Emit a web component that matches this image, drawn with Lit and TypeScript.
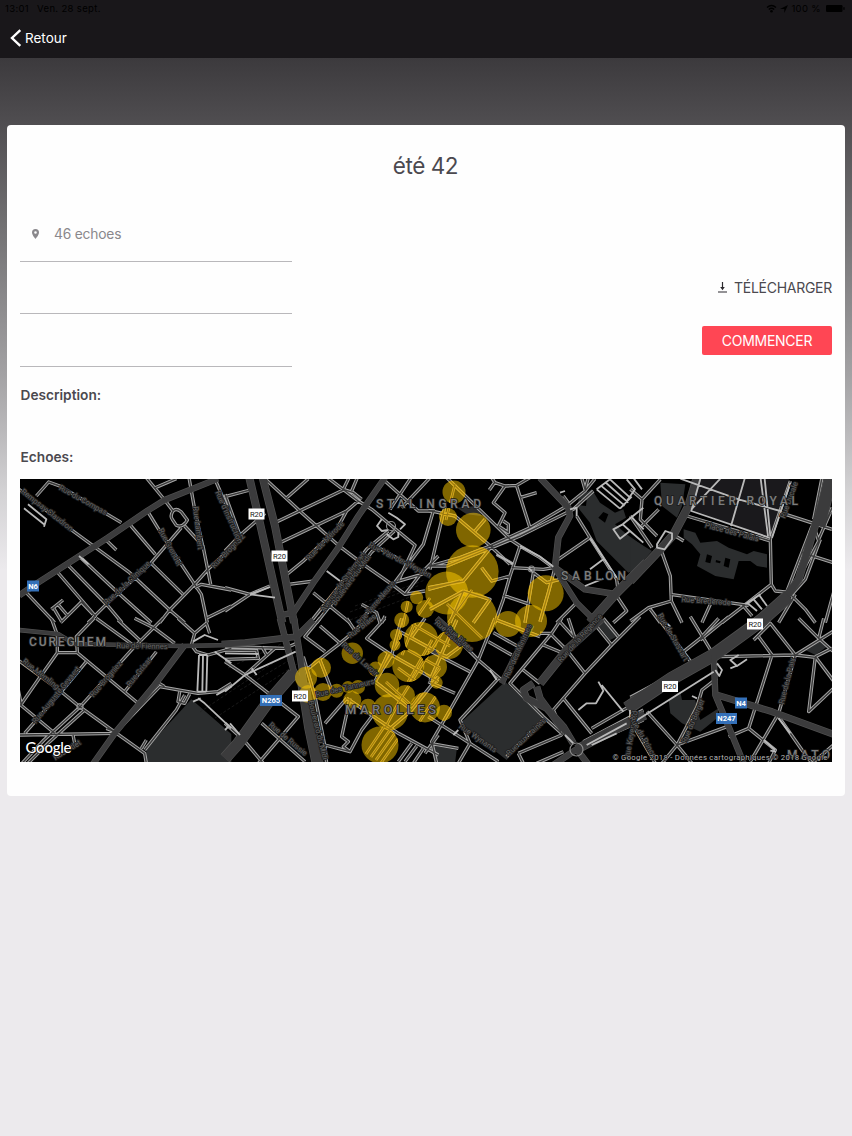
import { css, html, svg, LitElement } from "lit";
import { customElement, property } from "lit/decorators.js";

// The map is split in tiles, each drawn at three times its size.
const tiles = [
  {
    x: 18,
    y: 476,
    major: [[15, "M4 358L60 320L150 262L270 185L390 103L440 72L600 8"]],
    minor:
      "M0 38L165 165L335 290L455 402L500 440M55 60L92 18L125 30L310 140M335 145L412 235M225 425L265 385L400 260L490 155M400 262L495 355M388 105L425 165L490 265L530 325L550 355L568 440M385 5L440 72L465 105M500 150L555 210L578 325M412 35L475 8M513 5L530 100L553 205M592 12L630 100M425 440L455 402L530 325L570 280L640 215M530 335L550 325L640 342M568 425L640 390M260 188L295 222M183 240L300 350L400 440M148 265L270 390L312 440M118 288L232 420L210 440M25 350L110 440M128 440L190 378L225 415M100 400L135 372M120 385L150 420M108 398L130 435M465 105Q455 120 463 130L475 148Q490 155 503 140L508 132L490 108Q475 95 465 105",
    white: "M30 85L85 130L78 152M18 97L78 145M183 240L212 265",
    parks: "",
  },
  {
    x: 18,
    y: 620,
    major: [
      [10, "M0 30L120 42L170 72L490 78L640 75"],
      [15, "M500 75L410 195L290 340L225 432"],
    ],
    minor:
      "M100 -5L118 45L118 98L178 98L175 50L228 -5M118 98L60 180L8 255L110 340M178 98L360 250M0 120L130 215L185 260L275 325L380 400L385 430M205 125L130 215L20 340M345 85L185 262L78 360L12 430M200 270L95 365L30 430M415 95L320 215M235 -5L345 75M300 0L370 65M350 -5L410 25L470 70M435 -5L345 85M0 345L290 340M0 205L10 255M480 -5L530 40L520 75L535 95L570 105L640 85M530 40L565 10L575 40M305 325L425 200L540 220L600 215L640 190M415 185L440 200M500 225L475 270L380 390M485 215L480 245L500 250L515 222M165 345L172 380M265 325L290 335M370 385L385 360",
    white: "M543 105L538 215M555 105L553 215M568 105L565 215M538 215L565 215M543 105L568 105M540 235L560 250L640 325M525 245L548 235M525 65L560 45L600 60M590 95L640 130M595 225L640 200",
    parks: "M520 238L640 342L640 430L385 430L385 385Z",
  },
  {
    x: 225,
    y: 476,
    major: [
      [20, "M73 5L100 120L172 440M113 5L150 150L207 440"],
      [15, "M480 5L400 120L340 215L265 320L205 410L165 418"],
    ],
    minor:
      "M122 10L230 110L345 212L415 265L505 328L540 355L600 345M0 62L75 42M0 55L45 178L120 112M45 178L0 225M185 65L250 8M230 110L225 105M150 140L355 42M165 200L365 105L400 75M308 5L400 75L440 100L500 150L570 208L520 315M365 105L335 160L235 255L180 300M190 325L268 315M0 335L75 355L135 330M75 355L0 405M480 15L580 105L630 105M615 5L530 95M558 5L495 100M490 165L425 220L335 340L255 440M508 165L440 228L350 345L275 440M460 215L600 292L505 320M625 105L595 205L505 325L400 440M640 240L590 290L540 355M265 350L375 440M410 385L455 410L465 440M355 40L385 50L410 70M372 5L355 40M397 5L380 45M470 440L480 420",
    white: "M305 285L345 315M75 355L150 365M75 355L135 333M470 130L456 150L470 165L490 162M485 175L505 190L520 183L520 168M525 160L540 145L515 125L490 110",
    parks: "",
  },
  {
    x: 225,
    y: 620,
    major: [
      [16, "M165 -5L205 150L240 210M207 -5L222 90L240 210M-10 72L60 68L215 50L265 0"],
      [32, "M205 160L130 245L40 370L0 415"],
      [32, "M235 190L255 320L280 440"],
    ],
    minor:
      "M235 110L270 230L300 380L305 430M285 18L345 70L300 105L250 145M285 -5L240 50L300 95M345 70L390 32L365 -5M390 32L425 -5M480 -5L425 55L500 105M0 90L95 92L100 115L0 118M0 125L60 165L220 290L100 430M0 80L180 85L215 70M60 365L115 430M110 310L240 425M285 120L320 210M365 235L300 310M365 235L410 265L520 340L640 405M300 375L375 395M375 235L350 350L370 365L355 380L375 395L410 330L440 290M600 400L640 345M530 -5L500 105L450 185L560 270M525 35L640 98M500 105L640 185M450 185L490 100M640 170L560 270L490 330M600 -5L560 50M520 425L560 370M540 425L575 378M565 430L595 385M300 375L270 430M110 80L125 105M150 85L60 165M0 310L45 350",
    white: "M0 215L60 165L212 95M0 330L10 320M15 310L45 345M80 145L95 165M0 100L100 102",
    parks: "",
  },
  {
    x: 430,
    y: 476,
    major: [
      [16, "M330 5L415 95L420 120L385 185L375 275L465 340L560 355"],
      [24, "M650 260L560 350L480 440"],
      [14, "M370 270L440 380L500 440"],
    ],
    minor:
      "M-5 103L75 120L175 205L240 265M50 5L240 190L270 210L330 245L370 275M-5 340L90 315M0 270L90 245L180 210L300 155L410 90L465 45L495 8M50 270L270 180L430 100L490 45M-5 270L50 270M185 5L195 20L225 30L260 28L300 5M195 18L178 42M225 30L190 80L225 110L205 150L235 170L235 145L220 135M260 30L300 155M270 65L320 50M245 275L340 280L370 275M270 210L240 300L220 370L195 440M220 358L300 385M375 275L355 350L330 437M390 310L350 320L310 290M385 250L480 185M440 120L480 185L560 310L565 350M380 440L440 380M400 60L415 80M455 5L465 40L475 5M200 235L250 265M0 280L45 90M560 360L590 405L550 440M-5 335L100 315L190 205M155 275L185 315L240 300M100 345L180 370L130 440M100 345L60 440M0 400L100 345M135 165L165 130M310 290L285 440",
    white: "M270 210L330 242L370 272M520 250L480 280M520 308L465 330M200 235L250 265M390 50L405 45M420 100L440 95L440 120M500 40L570 98M512 28L583 88M525 18L595 80M540 10L600 65M500 40L540 10M570 98L605 62M550 160L578 145L600 165L570 188ZM578 145L640 95M600 165L640 200M590 10L615 40L580 90M480 185L560 305M295 275L310 290",
    parks:
      "M450 60L485 40L510 80L555 110L580 100L588 125L555 145L590 175L640 210L640 270L595 290L545 240L500 195L480 140L440 90ZM450 70L450 88L468 90L470 72ZM505 125L520 108L535 115L525 140ZM80 95L140 90L155 120L110 115Z",
  },
  {
    x: 430,
    y: 620,
    major: [
      [14, "M20 -5L70 40L120 90M305 15L260 100L215 190"],
      [22, "M515 -5L410 90L330 190"],
      [18, "M310 190L280 210L290 235L350 265L400 320L430 370M320 200L330 235L400 330"],
      [24, "M440 388L540 335L645 285"],
      [16, "M480 440L440 388L370 435"],
    ],
    minor:
      "M195 -5L145 120L60 270L5 365L20 430M145 120L215 180M145 120L100 75M120 155L-5 90M75 220L-5 185M-5 290L120 370L205 425M120 370L85 430M190 38L265 80M175 65L245 105M395 -5L365 40L240 190L265 215L340 290L400 345M360 40L410 90L465 160M385 0L430 50M340 75L400 100M415 -5L435 55M280 150L330 190M480 -5L545 75M520 -5L565 50M630 -10L545 75L465 160L370 270L400 340M400 235L485 340M485 325L640 235M205 175L90 300L120 370M230 410L340 300M265 400L395 345M265 400L280 430M0 370L85 385M320 430L400 395M330 40L365 40M200 0L330 50M0 180L80 0M0 90L50 110L90 80M460 365L640 270M465 378L640 300",
    white: "M445 270L470 250L498 250L520 212L505 185M515 195L580 275M180 150L200 180M70 345L85 330M470 375L590 310M485 375L560 340M405 345L430 370M600 270L600 300",
    parks: "M225 185L340 290L230 420L90 310ZM500 10L530 5L560 50L540 60ZM0 375L80 390L75 430L15 430Z",
  },
  {
    x: 632,
    y: 476,
    major: [
      [22, "M195 5L170 90L125 175L85 220L-5 315"],
      [36, "M600 -10L560 150"],
      [20, "M555 130L500 310L460 365"],
      [36, "M470 360L380 440"],
    ],
    minor:
      "M30 70L25 130L75 180M-5 40L30 70L85 10M-5 120L60 215M80 100L30 150M165 120L415 195M415 190L418 325L430 345L480 350M418 325L270 440M115 355L350 388M90 230L115 300L118 375L150 440M118 375L50 395L-5 435M235 385L210 440M55 400L85 440M475 15L415 190M445 110L600 160M545 150L560 195L480 345M540 150L465 345M565 190L520 310L480 355M510 230L610 262M470 350L520 400L550 440M610 330L580 440M330 385L360 420M600 95L580 140M570 5L545 130M595 110L560 190M440 440L490 355M130 180L155 195",
    white: "M145 8L320 70L445 105M205 8L178 105L412 185M265 8L178 100M338 8L297 150M386 8L408 180M398 8L415 180M475 20L420 185M345 380L375 405M365 370L390 400M380 355L405 390M340 385L385 355M75 205L100 165L120 172L120 190L98 220L75 215ZM0 0L30 40M0 125L35 160",
    parks:
      "M85 20L160 25L150 90L135 125L90 90ZM-5 185L60 225L-5 300ZM155 160L190 170L205 200L255 195L290 215L345 235L365 225L405 235L405 275L375 270L355 255L320 255L305 310L250 300L195 270L205 235L180 205L155 185ZM225 235L240 240L235 262L220 258ZM280 245L295 250L290 275L275 270ZM252 252L266 256L264 262L251 259Z",
  },
  {
    x: 632,
    y: 620,
    major: [
      [36, "M390 0L245 105L120 175L-15 265"],
      [15, "M245 105L250 225L290 320L335 430"],
      [17, "M255 225L420 275L610 345"],
    ],
    minor:
      "M-5 232L215 115M75 -10L180 130L215 115M155 95L205 55L260 -5M175 -10L245 105M290 -10L205 60M380 50L420 105L350 325L290 350M265 110L490 105L550 112M365 60L415 10L490 105L610 30M550 110L610 190M550 110L530 275L610 200M500 -5L560 55L610 100M600 85L550 110M490 105L440 280L355 425M440 290L510 390L540 430M350 325L430 390L410 430M610 370L540 430M255 175L210 210L195 260L135 375L90 430M45 275L135 375L180 430M0 310L70 430M135 375L285 320M0 250L20 240L35 245L40 230L20 228M265 90L400 5M205 120L230 105M250 100L265 85M560 55L575 -5",
    white: "M5 307L245 155M255 130L270 150L262 168L250 150M320 105L295 120L315 138L345 118M295 145L320 135M440 295L475 340M395 360L430 390M415 392L432 395M105 10L115 20M180 228L195 235",
    parks: "M110 240L145 215L150 240L190 240L195 270L205 300L260 265L255 295L205 335L150 310L115 280ZM520 90L560 60L585 80L550 105Z",
  },
];

// small streets and stairs below the echoes
const alleys =
  "M472 590L449 622L425 660L400 700L385 728M447 604L482 638M415 622L402 655M410 592L400 640L385 665M430 598L412 624L450 646M408 650L440 668M398 668L428 690M386 682L412 706M440 668L412 706M432 640L408 682M440 690L418 724M455 484L446 520M366 754l18 -27M371 757l19 -27M376 760l19 -27M381 763l19 -27M383 726l18 10";

// x, y, radius
const echoes = [
  [454, 492, 11.5], [448, 517, 9], [473.3, 530, 17.3], [472.3, 571.5, 26.3],
  [446.7, 593, 21.5], [545.7, 593.3, 18], [472, 617, 25], [508, 624, 13],
  [531, 621, 16], [449, 645, 14], [416.7, 597.7, 6.5], [406.7, 606.7, 6],
  [425, 609, 9], [401.7, 620, 7.5], [352.3, 653.3, 10.7], [421, 639, 17],
  [408.3, 666, 16], [435, 666.7, 12], [396, 635, 6], [395, 645, 5.5],
  [386, 660, 8.5], [375.7, 669, 7.5], [387, 685, 12.3], [405, 695, 10],
  [425, 707.5, 15], [390, 712, 18], [380, 745, 18.5], [368, 706.7, 8],
  [352.3, 700, 9], [336.7, 690.7, 7], [358, 687, 7], [348, 687, 6],
  [323, 692, 9], [321, 667.7, 10], [306, 677.7, 11], [308, 694, 9],
  [436.7, 682.7, 6], [444, 712.7, 8],
];

// text, x, y, rotation
const streets: [string, number, number, number][] = [
  ["Rempsay Claudron", 47, 510, 38],
  ["Rue du Compas", 83, 500, 29],
  ["Rue de la Clinique", 127, 583, -43],
  ["Rue Grondel", 170, 547, 62],
  ["Rue Lambert", 198, 528, 83],
  ["Rue Brogniez", 228, 551, -46],
  ["Rue d'Instruction", 229, 517, 66],
  ["Rue Memling", 41, 674, 38],
  ["Rue Auguste Gevaert", 56, 695, -51],
  ["Rue Brogniez", 106, 679, -49],
  ["Rue Grisar", 139, 672, -51],
  ["Rue Otlet", 67, 750, -32],
  ["Rue de Fiennes", 142, 646, 1],
  ["Rue de Mérode", 325, 541, -46],
  ["Avenue de Stalingrad", 343, 582, -54],
  ["Boulevard du Midi", 351, 580, -54],
  ["Rue Van der Weyden", 400, 560, 27],
  ["Rue Terre-Neuve", 376, 603, -50],
  ["Rue du Lavoir", 360, 659, 42],
  ["Rue des Tanneurs", 345, 688, -13],
  ["Rue Blaes", 362, 626, -38],
  ["Rue Haute", 449, 633, 42],
  ["Rue Blaes", 460, 639, 42],
  ["Rue des Minimes", 518, 651, -66],
  ["Rue de la Régence", 580, 638, -48],
  ["Rue aux Laines", 526, 737, -43],
  ["Rue Wynants", 478, 738, 35],
  ["Boulevard du Midi", 318, 730, 76],
  ["Rue de Russie", 288, 739, 40],
  ["Place des Palais", 732, 532, 15],
  ["Rue Brederode", 706, 601, 4],
  ["Rue Ducale", 789, 500, -70],
  ["Rue de Stassart", 673, 637, 60],
  ["Rue de la Paix", 787, 681, -76],
  ["Rue du Berger", 693, 721, -67],
  ["Rue Keyenveld", 631, 735, -80],
  ["Rue du Prince", 643, 737, 60],
];

const districts: [string, number, number, number, number][] = [
  ["STALINGRAD", 376, 507.5, 105, 12],
  ["QUARTIER ROYAL", 654, 504.5, 144, 12],
  ["SABLON", 561, 579.5, 65, 12],
  ["MAROLLES", 345, 713.5, 91, 13],
  ["CUREGHEM", 29, 645.5, 77, 12],
  ["MATO", 787, 758.5, 43, 12],
];

const shields: [string, number, number, number, string][] = [
  ["N6", 33, 586, 12, "blue"],
  ["R20", 256.5, 514, 16, "white"],
  ["R20", 279.5, 556, 16, "white"],
  ["R20", 300, 696, 16, "white"],
  ["N265", 271, 700.5, 22, "blue"],
  ["R20", 755, 624, 16, "white"],
  ["R20", 670, 686.5, 16, "white"],
  ["N4", 741, 703, 12, "blue"],
  ["N247", 726.5, 718.5, 21, "blue"],
];

@customElement("echo-map")
class EchoMapElement extends LitElement {
  render() {
    const at = (t) => `translate(${t.x} ${t.y}) scale(0.33333)`;
    const circles = (name) =>
      echoes.map(([x, y, r]) => svg`<circle class=${name} cx=${x} cy=${y} r=${r} />`);
    return html`
      <svg viewBox="20 479 812 283" preserveAspectRatio="none">
        <clipPath id="covered">${circles("clip")}</clipPath>
        ${tiles.map(
          (t) => svg`<path class="park" fill-rule="evenodd" transform=${at(t)} d=${t.parks} />`
        )}
        <path class="square" d="M700 479H789L770 538L692 510Z" />
        <path class="rails" d="M200 712L300 645M215 718L300 662M228 668L290 640M240 690L298 655M350 612L420 585M350 620L415 595M355 606L425 580" />
        ${tiles.map((t) => svg`<path class="casing" transform=${at(t)} d=${t.minor} />`)}
        ${tiles.map((t) =>
          t.major.map(
            ([w, d]) => svg`<path class="edge" stroke-width=${Number(w) + 4} transform=${at(t)} d=${d} />`
          )
        )}
        ${tiles.map((t) => svg`<path class="minor" transform=${at(t)} d=${t.minor} />`)}
        ${tiles.map((t) =>
          t.major.map(
            ([w, d]) => svg`<path class="major" stroke-width=${w} transform=${at(t)} d=${d} />`
          )
        )}
        ${tiles.map((t) => svg`<path class="white" transform=${at(t)} d=${t.white} />`)}
        <circle class="ring" cx="391" cy="526" r="4.5" />
        <circle class="ring" cx="80" cy="706.5" r="3" />
        <circle class="ring" cx="576.5" cy="749.5" r="6.5" />
        <circle class="ring" cx="531.5" cy="569" r="3" />
        ${circles("echo")}
        <g clip-path="url(#covered)">
          ${tiles.map((t) => svg`<path class="glow" transform=${at(t)} d=${t.minor} />`)}
          <path class="alley" d=${alleys} />
          ${tiles.map((t) => svg`<path class="glow inner" transform=${at(t)} d=${t.minor} />`)}
          <path class="alley inner" d=${alleys} />
        </g>
        ${streets.map(
          ([name, x, y, angle]) => svg`
            <text class="street" transform="translate(${x} ${y}) rotate(${angle})" dy="2.5">${name}</text>`
        )}
        ${districts.map(
          ([name, x, y, width, size]) => svg`
            <text class="district" x=${x} y=${y} font-size=${size} textLength=${width}>${name}</text>`
        )}
        ${shields.map(
          ([name, x, y, w, kind]) => svg`
            <rect class=${kind} x=${x - w / 2} y=${y - 5.5} width=${w} height="11" />
            <text class="shield ${kind}" x=${x} y=${y + 2.7}>${name}</text>`
        )}
        <text class="google" x="25.5" y="752.5" textLength="46">Google</text>
        <text class="legal" x="612.5" y="760.3" textLength="215">© Google 2018 - Données cartographiques © 2018 Google</text>
      </svg>
    `;
  }

  static styles = css`
    :host {
      display: block;
      height: 283px;
      background: #000;
    }

    svg {
      display: block;
      width: 100%;
      height: 100%;
      font-family: Roboto, sans-serif;
    }

    path {
      fill: none;
      stroke-linejoin: round;
    }

    path.park {
      fill: #2b2d2e;
    }

    path.square {
      fill: #1a191c;
    }

    .rails {
      stroke: #242424;
      stroke-width: 0.7;
      stroke-dasharray: 3 2;
    }

    .casing {
      stroke: #a6a6a6;
      stroke-width: 10;
    }

    .minor {
      stroke: #3a3a3a;
      stroke-width: 4.2;
    }

    .edge {
      stroke: #505050;
    }

    .major {
      stroke: #3b3b3c;
    }

    .white {
      stroke: #b9b9b9;
      stroke-width: 5.5;
    }

    .ring {
      fill: none;
      stroke: #8a8a8a;
      stroke-width: 1.2;
    }

    .echo {
      fill: #ffcc00;
      fill-opacity: 0.5;
    }

    .glow {
      stroke: #dcae1c;
      stroke-width: 9;
    }

    .glow.inner {
      stroke: #9a7a10;
      stroke-width: 3.6;
    }

    .alley {
      stroke: #dcae1c;
      stroke-width: 2.8;
    }

    .alley.inner {
      stroke: #9a7a10;
      stroke-width: 1.1;
    }

    text {
      text-anchor: middle;
    }

    .street {
      font-size: 7.6px;
      fill: #626262;
      stroke: #202020;
      stroke-width: 1.8;
      paint-order: stroke;
    }

    .district {
      text-anchor: start;
      font-weight: 500;
      fill: #7d7d7d;
      stroke: #1b1b1b;
      stroke-width: 1.5;
      paint-order: stroke;
    }

    rect.white {
      fill: #fff;
      stroke: none;
    }

    rect.blue {
      fill: #3470b8;
    }

    .shield {
      font-size: 7.6px;
      stroke: none;
      fill: #222;
    }

    .shield.blue {
      fill: #fff;
      font-weight: 700;
    }

    .google {
      font-family: Lato, sans-serif;
      font-size: 15px;
      font-weight: 500;
      text-anchor: start;
      fill: #fff;
      stroke: #000;
      stroke-width: 1.2;
      paint-order: stroke;
    }

    .legal {
      font-size: 7.8px;
      text-anchor: start;
      fill: #b5b5b5;
      stroke: #000;
      stroke-width: 1;
      paint-order: stroke;
    }
  `;
}

@customElement("app-root")
class AppRootElement extends LitElement {
  @property()
  name: string = "été 42";

  @property({ type: Number })
  count: number = 46;

  render() {
    return html`
      <header>
        <div class="status">
          <span>13:01</span>
          <span class="date">Ven. 28 sept.</span>
          <svg class="wifi" width="11" height="9" viewBox="0 0 11 9">
            <path d="M1 3.5Q5.5 -0.5 10 3.5M2.8 5.4Q5.5 3 8.2 5.4" fill="none" stroke="#000" stroke-width="1.4" />
            <circle cx="5.5" cy="7.3" r="1.3" />
          </svg>
          <svg width="8" height="8" viewBox="0 0 8 8"><path d="M8 0L4.3 8V3.9H0Z" /></svg>
          <span class="percent">100 %</span>
          <svg width="19" height="7" viewBox="0 0 19 7">
            <rect width="16.5" height="7" rx="1.2" />
            <rect x="17.3" y="2.2" width="1.3" height="2.6" />
          </svg>
        </div>
        <div class="back">
          <svg width="12" height="18" viewBox="0 0 12 18">
            <path d="M10.3 1.2L2 9L10.3 16.8" fill="none" stroke="#fff" stroke-width="2.4" />
          </svg>
          <span>Retour</span>
        </div>
      </header>
      <main>
        <h1>${this.name}</h1>
        <div class="columns">
          <div class="infos">
            <div class="info">
              <svg width="7" height="10" viewBox="0 0 7 10">
                <path
                  fill="#8a888c"
                  fill-rule="evenodd"
                  d="M3.5 0A3.5 3.5 0 0 0 0 3.5C0 6 3.5 10 3.5 10S7 6 7 3.5A3.5 3.5 0 0 0 3.5 0ZM3.5 2.2A1.3 1.3 0 1 1 3.5 4.8A1.3 1.3 0 0 1 3.5 2.2Z"
                />
              </svg>
              <span>${this.count} echoes</span>
            </div>
            <div class="info"></div>
            <div class="info last"></div>
          </div>
          <div class="actions">
            <div class="download">
              <svg width="9" height="11" viewBox="0 0 9 11">
                <path d="M4.5 0V6M0 10H9" fill="none" stroke="#2b292e" stroke-width="1.2" />
                <path d="M2.2 5H6.8L4.5 8.2Z" fill="#2b292e" />
              </svg>
              <span>TÉLÉCHARGER</span>
            </div>
            <button>COMMENCER</button>
          </div>
        </div>
        <h2>Description:</h2>
        <h2 class="echoes">Echoes:</h2>
        <echo-map></echo-map>
      </main>
    `;
  }

  static styles = css`
    :host {
      display: block;
      box-sizing: border-box;
      height: 1136px;
      overflow: hidden;
      font-family: Inter, sans-serif;
      color: #4b494f;
      background: linear-gradient(
        #3c3a3d 58px,
        #504e51 125px,
        #6e6d6f 215px,
        #a3a2a4 375px,
        #d2d1d3 490px,
        #eceaed 570px
      );
    }

    header {
      height: 58px;
      background: #19171a;
    }

    .status {
      display: flex;
      align-items: center;
      height: 17px;
      padding: 0 7px 0 5px;
      gap: 3px;
      font-size: 9.5px;
      color: #000;
      letter-spacing: 0.35px;
    }

    .date {
      margin-left: 5px;
    }

    .wifi {
      margin-left: auto;
    }

    .percent {
      margin-right: 2px;
    }

    .back {
      display: flex;
      align-items: center;
      gap: 3px;
      height: 42px;
      padding-left: 10px;
      font-size: 13.5px;
      color: #fff;
    }

    main {
      margin: 67px 7px 0;
      padding: 0 13px;
      height: 671px;
      box-sizing: border-box;
      border-radius: 4px;
      background: #fefefe;
    }

    h1 {
      margin: 0;
      padding: 26px 1px 27px 0;
      font-size: 22.5px;
      line-height: 30px;
      font-weight: 400;
      text-align: center;
      letter-spacing: -0.45px;
    }

    .columns {
      display: flex;
      justify-content: space-between;
      height: 159px;
    }

    .infos {
      width: 272px;
    }

    .info {
      display: flex;
      align-items: center;
      gap: 15px;
      box-sizing: border-box;
      height: 52px;
      padding-left: 12px;
      border-bottom: 1px solid #b9b8bb;
      font-size: 13.8px;
      letter-spacing: -0.2px;
      color: #8a888c;
    }

    .info:first-child {
      height: 54px;
      padding-bottom: 2px;
    }

    .info.last {
      height: 53px;
    }

    .actions {
      display: flex;
      flex-direction: column;
      align-items: flex-end;
      padding-top: 69px;
    }

    .download {
      display: flex;
      align-items: center;
      gap: 7px;
      height: 20px;
      font-size: 14px;
      letter-spacing: -0.27px;
    }

    button {
      width: 130px;
      height: 29px;
      margin-top: 29px;
      padding: 0;
      border: 0;
      border-radius: 2px;
      background: #ff4654;
      color: #fff;
      font: 14px Inter, sans-serif;
      letter-spacing: -0.27px;
    }

    h2 {
      margin: 0;
      padding: 18px 0 20px 0.5px;
      font-size: 13.7px;
      line-height: 20px;
      font-weight: 600;
    }

    h2.echoes {
      padding: 22px 0 12px 0.5px;
    }
  `;
}
